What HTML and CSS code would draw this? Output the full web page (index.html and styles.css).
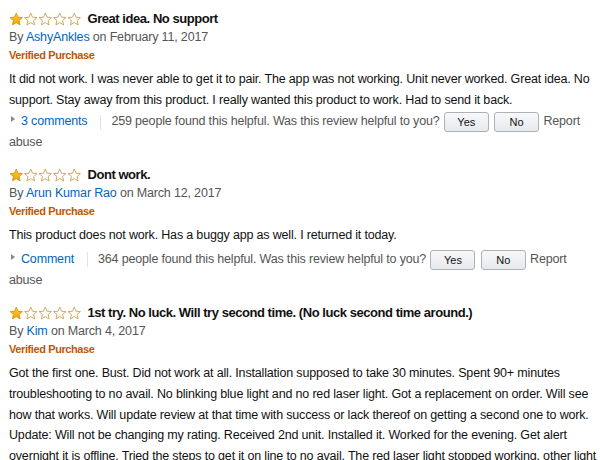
FILE: index.html
```html
<!DOCTYPE html>
<html>
<head>
<meta charset="utf-8">
<link rel="stylesheet" href="styles.css">
</head>
<body>
<svg width="0" height="0" class="defs">
  <defs>
    <linearGradient id="gold" x1="0" y1="0" x2="0" y2="1">
      <stop offset="0" stop-color="#ffce3d"/>
      <stop offset="1" stop-color="#f0a000"/>
    </linearGradient>
    <path id="star" d="M7.25 1.1 L9 5.2 L13.4 5.6 L10.1 8.5 L11.1 12.9 L7.25 10.6 L3.4 12.9 L4.4 8.5 L1.1 5.6 L5.5 5.2 Z"/>
  </defs>
</svg>
<div class="reviews">

  <div class="review">
    <div class="review-head">
      <svg class="stars" viewBox="0 0 72.5 14" width="72.5" height="14">
        <use href="#star" class="on"/>
        <use href="#star" x="14.5" class="off"/>
        <use href="#star" x="29" class="off"/>
        <use href="#star" x="43.5" class="off"/>
        <use href="#star" x="58" class="off"/>
      </svg>
      <span class="title">Great idea. No support</span>
    </div>
    <div class="byline">By <a class="link">AshyAnkles</a> on February 11, 2017</div>
    <div class="verified">Verified Purchase</div>
    <p class="body">It did not work. I was never able to get it to pair. The app was not working. Unit never worked. Great idea. No support. Stay away from this product. I really wanted this product to work. Had to send it back.</p>
    <div class="actions">
      <span class="caret"></span><a class="link">3 comments</a><span class="sep"></span><span class="helpful">259 people found this helpful. Was this review helpful to you?</span> <button class="btn">Yes</button> <button class="btn">No</button> <span>Report</span> <span>abuse</span>
    </div>
  </div>

  <div class="review">
    <div class="review-head">
      <svg class="stars" viewBox="0 0 72.5 14" width="72.5" height="14">
        <use href="#star" class="on"/>
        <use href="#star" x="14.5" class="off"/>
        <use href="#star" x="29" class="off"/>
        <use href="#star" x="43.5" class="off"/>
        <use href="#star" x="58" class="off"/>
      </svg>
      <span class="title">Dont work.</span>
    </div>
    <div class="byline">By <a class="link">Arun Kumar Rao</a> on March 12, 2017</div>
    <div class="verified">Verified Purchase</div>
    <p class="body">This product does not work. Has a buggy app as well. I returned it today.</p>
    <div class="actions single">
      <span class="caret"></span><a class="link">Comment</a><span class="sep"></span><span class="helpful">364 people found this helpful. Was this review helpful to you?</span> <button class="btn">Yes</button> <button class="btn">No</button> <span>Report</span> <span>abuse</span>
    </div>
  </div>

  <div class="review">
    <div class="review-head">
      <svg class="stars" viewBox="0 0 72.5 14" width="72.5" height="14">
        <use href="#star" class="on"/>
        <use href="#star" x="14.5" class="off"/>
        <use href="#star" x="29" class="off"/>
        <use href="#star" x="43.5" class="off"/>
        <use href="#star" x="58" class="off"/>
      </svg>
      <span class="title">1st try. No luck. Will try second time. (No luck second time around.)</span>
    </div>
    <div class="byline">By <a class="link">Kim</a> on March 4, 2017</div>
    <div class="verified">Verified Purchase</div>
    <p class="body">Got the first one. Bust. Did not work at all. Installation supposed to take 30 minutes. Spent 90+ minutes troubleshooting to no avail. No blinking blue light and no red laser light. Got a replacement on order. Will see how that works. Will update review at that time with success or lack thereof on getting a second one to work. Update: Will not be changing my rating. Received 2nd unit. Installed it. Worked for the evening. Get alert overnight it is offline. Tried the steps to get it on line to no avail. The red laser light stopped working, other light was blinking and changing colors constantly, and app locked up. Could not get to any other settings in the app to reset it.</p>
  </div>

</div>
</body>
</html>
```

FILE: styles.css
```css
html, body {
  margin: 0;
  padding: 0;
  background: #fff;
}

.defs {
  position: absolute;
  width: 0;
  height: 0;
}

.reviews {
  width: 588px;
  padding: 9px 0 0 9px;
  font-family: "Liberation Sans", Arial, sans-serif;
  font-size: 12.5px;
  letter-spacing: -0.17px;
  color: #111;
}

.review {
  margin-bottom: 12px;
}

.review-head {
  display: flex;
  align-items: center;
  gap: 6px;
  height: 19px;
}

.stars {
  flex: none;
}

.stars .on {
  fill: url(#gold);
  stroke: #d18b00;
  stroke-width: 0.8;
}

.stars .off {
  fill: #fff;
  stroke: #c9a24a;
  stroke-width: 0.9;
}

.title {
  font-weight: bold;
  font-size: 13px;
  letter-spacing: -0.45px;
  color: #111;
}

.byline {
  color: #555;
  line-height: 18px;
}

.link {
  color: #0066c0;
}

.verified {
  font-size: 11px;
  letter-spacing: -0.4px;
  font-weight: bold;
  color: #c45500;
  line-height: 18px;
}

.body {
  margin: 5px 0 0;
  line-height: 20.7px;
}

.actions {
  margin-top: 1px;
  line-height: 21px;
  color: #555;
}

.actions.single {
  margin-top: 3px;
}

/* small disclosure triangle before the comments link */
.caret {
  display: inline-block;
  width: 0;
  height: 0;
  border-top: 3px solid transparent;
  border-bottom: 3px solid transparent;
  border-left: 4px solid #888;
  margin: 0 6px 0 2px;
  vertical-align: 3px;
}

.sep {
  display: inline-block;
  width: 1px;
  height: 15px;
  background: #e3e3e3;
  vertical-align: middle;
  margin: 0 10px 0 13px;
}

.btn {
  font-family: "Liberation Sans", Arial, sans-serif;
  font-size: 11px;
  color: #111;
  width: 45px;
  height: 20px;
  padding: 0;
  margin: 0 1px;
  border: 1px solid #adb1b8;
  border-radius: 3px;
  background: linear-gradient(#f7f8fa, #e7e9ec);
  vertical-align: middle;
}
```
